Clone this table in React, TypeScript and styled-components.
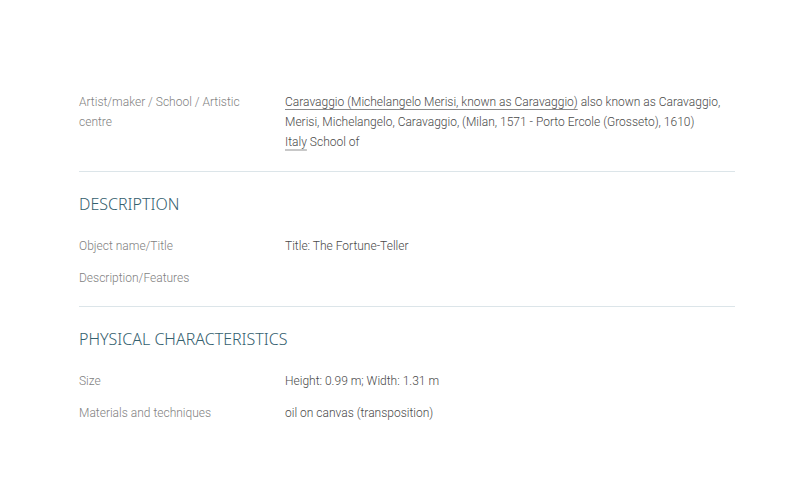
import styled, { createGlobalStyle } from "styled-components";

const GlobalStyle = createGlobalStyle`
  body {
    margin: 0;
    background: #ffffff;
    font-family: Roboto, "Liberation Sans", sans-serif;
  }
`;

interface IField {
  label: string;
  value: React.ReactNode;
}

const Field = ({ label, value }: IField) => (
  <Row>
    <Label>{label}</Label>
    <Value>{value}</Value>
  </Row>
);

const App = () => {
  return (
    <>
      <GlobalStyle />
      <Page>
        {/* 작가 정보 */}
        <Section $first>
          <Field
            label="Artist/maker / School / Artistic centre"
            value={
              <>
                <Link>Caravaggio (Michelangelo Merisi, known as Caravaggio)</Link>{" "}
                also known as Caravaggio, Merisi, Michelangelo, Caravaggio, (Milan,
                1571 - Porto Ercole (Grosseto), 1610)
                <br />
                <Link $light>Italy</Link> School of
              </>
            }
          />
        </Section>

        <Section>
          <Heading>DESCRIPTION</Heading>
          <Field label="Object name/Title" value="Title: The Fortune-Teller" />
          <Field label="Description/Features" value="" />
        </Section>

        <Section $last>
          <Heading>PHYSICAL CHARACTERISTICS</Heading>
          <Field label="Size" value="Height: 0.99 m; Width: 1.31 m" />
          <Field label="Materials and techniques" value="oil on canvas (transposition)" />
        </Section>
      </Page>
    </>
  );
};

export default App;

const Page = styled.div`
  width: 656px;
  margin: 0 auto 0 79px;
  padding-top: 86px;
`;

const Section = styled.section<{ $first?: boolean; $last?: boolean }>`
  padding: ${({ $first }) => ($first ? "0" : "22px")} 0 ${({ $first }) => ($first ? "13px" : "12px")};
  border-bottom: ${({ $last }) => ($last ? "none" : "1px solid #dce5e9")};
`;

const Heading = styled.h2`
  margin: 0 0 16px;
  font-family: "Noto Sans", "DejaVu Sans", sans-serif;
  font-size: 16px;
  line-height: 20px;
  font-weight: 300;
  color: #34606e;
  letter-spacing: 0;
`;

const Row = styled.div`
  display: grid;
  grid-template-columns: 206px 1fr;
  padding: 6px 0;
  font-size: 12px;
  line-height: 20px;
  font-weight: 300;
`;

const Label = styled.div`
  color: #7f7f7f;
  padding-right: 24px;
`;

const Value = styled.div`
  color: #4a4a4a;
  min-height: 20px;
`;

const Link = styled.span<{ $light?: boolean }>`
  text-decoration: underline;
  text-decoration-color: ${({ $light }) => ($light ? "#c8c8c8" : "#8a8a8a")};
  text-decoration-thickness: ${({ $light }) => ($light ? "2px" : "1px")};
  text-underline-offset: 3px;
`;
